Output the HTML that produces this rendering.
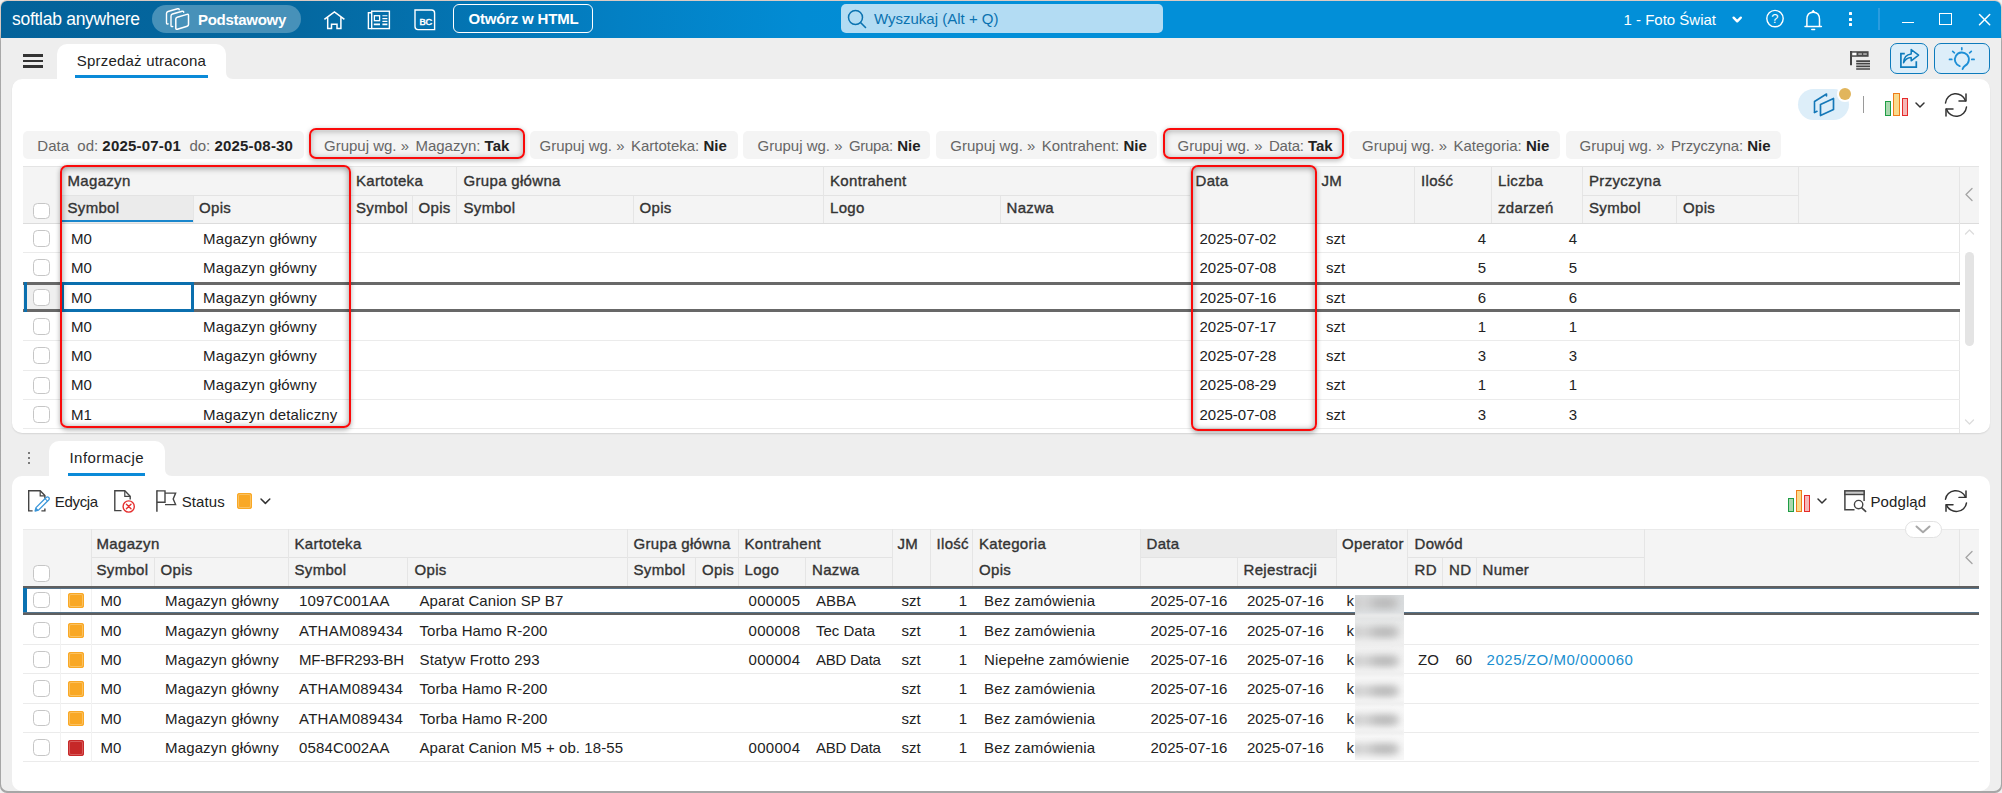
<!DOCTYPE html><html><head><meta charset="utf-8"><title>softlab anywhere</title><style>
*{box-sizing:border-box}
html,body{margin:0;padding:0}
body{width:2002px;height:793px;overflow:hidden;position:relative;background:#eeeeee;font-family:"Liberation Sans",sans-serif;font-size:15px;color:#222}
.a{position:absolute}
.t{position:absolute;white-space:nowrap;line-height:20px;height:20px}
.h{position:absolute;white-space:nowrap;line-height:20px;height:20px;color:#333;-webkit-text-stroke:0.36px #333;letter-spacing:0.32px}
.b{font-weight:700}
.w{color:#fff}
.cb{position:absolute;width:16.8px;height:16.8px;border:1.5px solid #c6c6c6;border-radius:4.5px;background:#fff}
.vl{position:absolute;width:1px;background:#e5e5e5}
.hl{position:absolute;height:1px;background:#ebebeb}
.chip{position:absolute;top:131px;height:28px;background:#f4f4f4;border-radius:5px}
.chip>span{position:absolute;top:4.8px;line-height:20px;white-space:nowrap;color:#666}
.chip b{color:#222;font-weight:700}
svg{position:absolute;overflow:visible}
</style></head><body>
<div class="a" style="left:0px;top:0px;width:2002px;height:793px;background:#f1f1f1"></div>
<div class="a" style="left:0px;top:0px;width:2002px;height:793px;background:linear-gradient(180deg,#dccbc3 0px,#d6c8c2 30px,#a8a8a8 42px,#a6a6a6 100%);border-radius:7px 7px 7px 7px"></div>
<div class="a" style="left:1px;top:1px;width:2000px;height:790.3px;background:#eeeeee;border-radius:6px 6px 7px 7px"></div>
<div class="a" style="left:1px;top:1px;width:2000px;height:37px;background:linear-gradient(90deg,#03629a 0px,#0468a0 300px,#0380c4 620px,#028cd4 800px,#028fd8 1000px,#028fd8 2000px);border-radius:6px 6px 0 0"></div>
<div class="t w" style="left:12px;top:9.0px;font-size:17.5px;letter-spacing:-0.28px">softlab anywhere</div>
<div class="a" style="left:152px;top:5px;width:149px;height:28px;background:#4791b9;border-radius:14px"></div>
<div class="t w b" style="left:198px;top:9.5px;font-size:15px;letter-spacing:-0.28px">Podstawowy</div>
<svg style="left:164px;top:7px;" width="27" height="24" viewBox="0 0 27 24" preserveAspectRatio="none" fill="none"><path d="M4.2 16.9 Q2.5 17.4 2.5 15.8 L2.5 6.5 Q2.5 5 4 4.5 L13.6 1.8 Q15.2 1.4 15.2 2.8" stroke="#fff" stroke-width="1.4" stroke-linecap="round"/>
<path d="M8.7 19.5 Q7 20 7 18.4 L7 9 Q7 7.5 8.5 7 L18.1 4.3 Q19.7 3.9 19.7 5.3" stroke="#fff" stroke-width="1.4" stroke-linecap="round"/>
<path d="M11.8 12 Q11.8 10.6 13.2 10.2 L23 7.4 Q24.5 7 24.5 8.5 L24.5 17.5 Q24.5 18.8 23.2 19.2 L13.4 22.2 Q11.8 22.7 11.8 21.2 Z" stroke="#fff" stroke-width="1.5" stroke-linejoin="round"/></svg>
<svg style="left:323px;top:9px;" width="23" height="21" viewBox="0 0 23 21" preserveAspectRatio="none" fill="none"><path d="M2 9.9 L11.4 2.9 L20.8 9.9 M4.7 8.2 V19.6 H8.5 V15.2 H14 V19.6 H17.9 V8.2" stroke="#fff" stroke-width="1.5" stroke-linejoin="miter" stroke-linecap="square"/></svg>
<svg style="left:367px;top:10px;" width="24" height="20" viewBox="0 0 24 20" preserveAspectRatio="none" fill="none"><rect x="4.7" y="1.2" width="17.7" height="17.4" stroke="#fff" stroke-width="1.4"/><path d="M4.7 2.8 H1.4 V18.6 H4.7" stroke="#fff" stroke-width="1.4"/>
<rect x="7.4" y="5.7" width="5.2" height="5" stroke="#fff" stroke-width="1.3"/>
<path d="M15.4 5.8 H20.4 M15.4 8.6 H20.4 M15.4 11.4 H20.4" stroke="#fff" stroke-width="1.1"/><path d="M6.8 14.4 H13 M15.4 14.4 H20.4" stroke="#fff" stroke-width="1.7"/></svg>
<svg style="left:413.8px;top:9px;" width="22" height="22" viewBox="0 0 22 22" preserveAspectRatio="none" fill="none"><path d="M1 1 H17.5 Q20.6 1 20.6 4 V20.6 H4 Q1 20.6 1 17.5 Z" stroke="#fff" stroke-width="1.4"/></svg>
<div class="t w" style="left:419.4px;top:12.100000000000001px;font-size:9.2px;letter-spacing:-0.1px;-webkit-text-stroke:0.5px #fff">BC</div>
<div class="a" style="left:453px;top:4px;width:140px;height:29px;border:1.6px solid #fff;border-radius:6px"></div>
<div class="t w b" style="left:468.5px;top:8.5px;font-size:15px;letter-spacing:-0.2px">Otwórz w HTML</div>
<div class="a" style="left:841px;top:4px;width:322px;height:29px;background:#b3dcf3;border-radius:5px"></div>
<svg style="left:847px;top:9px;" width="20" height="20" viewBox="0 0 20 20" preserveAspectRatio="none" fill="none"><circle cx="8.5" cy="8.5" r="7" stroke="#0a72b0" stroke-width="1.5"/><path d="M13.5 13.5 L18.5 18.5" stroke="#0a72b0" stroke-width="1.6" stroke-linecap="round"/></svg>
<div class="t" style="left:874px;top:8.5px;color:#0a72b0;font-size:15px">Wyszukaj (Alt + Q)</div>
<div class="t w" style="left:1623.5px;top:9.5px;font-size:15px">1 - Foto Świat</div>
<svg style="left:1731.9px;top:15.6px;" width="11" height="8" viewBox="0 0 11 8" preserveAspectRatio="none" fill="none"><path d="M1.6 1.7 L5.2 5.3 L8.8 1.7" stroke="#fff" stroke-width="2.4" stroke-linecap="round" stroke-linejoin="round"/></svg>
<svg style="left:1765px;top:9px;" width="20" height="20" viewBox="0 0 20 20" preserveAspectRatio="none" fill="none"><circle cx="10" cy="9.6" r="8.2" stroke="#fff" stroke-width="1.4"/></svg>
<div class="t w" style="left:1771.2px;top:9px;font-size:13px">?</div>
<svg style="left:1803px;top:8px;" width="20" height="23" viewBox="0 0 20 23" preserveAspectRatio="none" fill="none"><path d="M3.9 18 V11.5 Q3.9 4.3 10.2 4.3 Q16.5 4.3 16.5 11.5 V18 M2 18.4 H18.4 M8.8 21.5 H11.6" stroke="#fff" stroke-width="1.5" stroke-linecap="round"/><path d="M8.9 4 L10.2 2 L11.5 4 Z" fill="#fff" stroke="#fff" stroke-width="0.8" stroke-linejoin="round"/></svg>
<div class="a" style="left:1848.7px;top:12px;width:3.2px;height:3.2px;background:#fff;border-radius:0.6px"></div>
<div class="a" style="left:1848.7px;top:17.6px;width:3.2px;height:3.2px;background:#fff;border-radius:0.6px"></div>
<div class="a" style="left:1848.7px;top:23.2px;width:3.2px;height:3.2px;background:#fff;border-radius:0.6px"></div>
<div class="a" style="left:1878.2px;top:8px;width:2.2px;height:22px;background:#2a9cdf"></div>
<div class="a" style="left:1901.7px;top:22px;width:12.6px;height:1.4px;background:#fff"></div>
<div class="a" style="left:1939px;top:12.5px;width:13px;height:12.5px;border:1.6px solid #fff"></div>
<svg style="left:1978px;top:13px;" width="13" height="13" viewBox="0 0 13 13" preserveAspectRatio="none" fill="none"><path d="M1.5 1.5 L11.7 11.7 M11.7 1.5 L1.5 11.7" stroke="#fff" stroke-width="1.5" stroke-linecap="round"/></svg>
<div class="a" style="left:23px;top:54.3px;width:20px;height:2.7px;background:#333"></div>
<div class="a" style="left:23px;top:59.8px;width:20px;height:2.7px;background:#333"></div>
<div class="a" style="left:23px;top:65.3px;width:20px;height:2.7px;background:#333"></div>
<div class="a" style="left:57px;top:44.2px;width:169.3px;height:40px;background:#fff;border-radius:10px 10px 0 0"></div>
<svg style="left:226.3px;top:72px;" width="7" height="7" viewBox="0 0 7 7" preserveAspectRatio="none" fill="none"><path d="M0 0 Q0 7 7 7 L0 7 Z" fill="#fff"/></svg>
<div class="t" style="left:76.8px;top:50.7px;font-size:15px;color:#222;letter-spacing:0.2px">Sprzedaż utracona</div>
<div class="a" style="left:75px;top:75px;width:133px;height:3px;background:#0b8ad8"></div>
<svg style="left:1850px;top:51px;" width="21" height="20" viewBox="0 0 21 20" preserveAspectRatio="none" fill="none"><path d="M1 0 V14.2" stroke="#444" stroke-width="2"/><rect x="0.2" y="0.2" width="18.4" height="5.6" fill="#4a4a4a"/><rect x="2.2" y="1.7" width="4.3" height="2.6" fill="#fff"/><rect x="8.3" y="2.3" width="3.6" height="1.5" fill="#bbb"/><rect x="13.2" y="2.3" width="3.6" height="1.5" fill="#bbb"/>
<path d="M6.2 10.1 H20 M6.2 12.7 H20 M6.2 15.4 H20 M6.2 18 H20" stroke="#444" stroke-width="1.7"/></svg>
<div class="a" style="left:1889.8px;top:43px;width:38.3px;height:31px;background:#ddeef9;border:1.7px solid #0d7bbc;border-radius:7px"></div>
<div class="a" style="left:1933.8px;top:43px;width:56.2px;height:31px;background:#ddeef9;border:1.7px solid #0d7bbc;border-radius:7px"></div>
<svg style="left:1899px;top:48px;" width="22" height="21" viewBox="0 0 22 21" preserveAspectRatio="none" fill="none"><path d="M5.8 5.7 H1.9 V19.2 H17.3 V13.2" stroke="#0d7bbc" stroke-width="1.7" stroke-linejoin="miter"/><path d="M4.6 14.7 Q5 6.6 12.2 5.9 V1.6 L19.6 7.1 L12.2 12.8 V9.4 Q7 9.6 4.6 14.7 Z" stroke="#0d7bbc" stroke-width="1.5" stroke-linejoin="round"/></svg>
<svg style="left:1949px;top:46px;" width="26" height="26" viewBox="0 0 26 26" preserveAspectRatio="none" fill="none"><path d="M10.7 20.1 A7 7 0 1 1 16.2 19.6 Q14.3 20.8 13.6 23" stroke="#1e8fd6" stroke-width="1.9" stroke-linecap="round" stroke-linejoin="round"/><path d="M12.8 1.8 V3.6 M3.7 5.4 L5.4 6.8 M22.3 5.4 L20.6 6.8 M0.5 13.4 H2.8 M22.8 13.4 H25.1" stroke="#1e8fd6" stroke-width="1.7" stroke-linecap="round"/></svg>
<div class="a" style="left:12px;top:79px;width:1978px;height:354px;background:#fff;border-radius:10px;box-shadow:0 1px 1.5px rgba(0,0,0,0.10)"></div>
<div class="a" style="left:1798px;top:89px;width:51px;height:31px;background:#ddeef9;border-radius:15.5px"></div>
<svg style="left:1812px;top:92px;" width="24" height="25" viewBox="0 0 24 25" preserveAspectRatio="none" fill="none"><path d="M2.5 20.5 V9.5 L14.5 2 V4" stroke="#1478b8" stroke-width="1.6" stroke-linejoin="round" stroke-linecap="round"/><path d="M2.5 20.5 L5 19.3" stroke="#1478b8" stroke-width="1.6" stroke-linecap="round"/>
<path d="M8.5 12.5 L21.5 6.5 V17.5 L8.5 23.5 Z" stroke="#1478b8" stroke-width="1.7" stroke-linejoin="round"/></svg>
<div class="a" style="left:1837.2px;top:86.3px;width:15.4px;height:15.4px;background:#fff;border-radius:50%"></div>
<div class="a" style="left:1838.8px;top:87.9px;width:12.2px;height:12.2px;background:#e1b55c;border-radius:50%"></div>
<div class="a" style="left:1863px;top:96px;width:1.3px;height:17px;background:#9a9a9a"></div>
<div class="a" style="left:1885px;top:101px;width:6.4px;height:15px;background:#a9d8ae;border:1.6px solid #1f9d45"></div>
<div class="a" style="left:1893px;top:93px;width:7px;height:23px;background:#f9da8c;border:1.6px solid #ef7d1a"></div>
<div class="a" style="left:1901.8px;top:97.8px;width:6.4px;height:18.2px;background:#f5b8b8;border:1.6px solid #e52a2a"></div>
<svg style="left:1914.5px;top:101.5px;" width="10" height="7" viewBox="0 0 10 7" preserveAspectRatio="none" fill="none"><path d="M1 1 L5 5 L9 1" stroke="#333" stroke-width="1.5" stroke-linecap="round" stroke-linejoin="round"/></svg>
<svg style="left:1944px;top:92.5px;" width="24" height="24" viewBox="0 0 24 24" preserveAspectRatio="none" fill="none"><path d="M1.5 10 A10.3 10.3 0 0 1 21.5 7.8" stroke="#333" stroke-width="1.5" stroke-linecap="round"/><path d="M22 1 V8 H15" stroke="#333" stroke-width="1.5" stroke-linecap="round" stroke-linejoin="round"/>
<path d="M22.5 14 A10.3 10.3 0 0 1 2.5 16.2" stroke="#333" stroke-width="1.5" stroke-linecap="round"/><path d="M2 23 V16 H9" stroke="#333" stroke-width="1.5" stroke-linecap="round" stroke-linejoin="round"/></svg>
<div class="chip" style="left:23px;width:280.5px"><span style="left:14.3px">Data&nbsp; od: <b style="letter-spacing:0.2px">2025-07-01</b>&nbsp; do: <b style="letter-spacing:0.2px">2025-08-30</b></span></div>
<div class="chip" style="left:310px;width:214px"><span style="left:14px">Grupuj wg. »<i style="margin-left:-2px"></i>&nbsp; Magazyn: <b>Tak</b></span></div>
<div class="chip" style="left:530px;width:207.5px"><span style="left:9.5px">Grupuj wg. »<i style="margin-left:-2px"></i>&nbsp; Kartoteka: <b>Nie</b></span></div>
<div class="chip" style="left:743px;width:187px"><span style="left:14.5px">Grupuj wg. »<i style="margin-left:-2px"></i>&nbsp; <span style="position:static;letter-spacing:-0.3px">Grupa:</span> <b>Nie</b></span></div>
<div class="chip" style="left:936px;width:221px"><span style="left:14.3px">Grupuj wg. »<i style="margin-left:-2px"></i>&nbsp; Kontrahent: <b>Nie</b></span></div>
<div class="chip" style="left:1163.5px;width:179px"><span style="left:14px">Grupuj wg. »<i style="margin-left:-2px"></i>&nbsp; <span style="position:static;letter-spacing:-0.2px">Data:</span> <b>Tak</b></span></div>
<div class="chip" style="left:1348.5px;width:211px"><span style="left:13.5px">Grupuj wg. »<i style="margin-left:-2px"></i>&nbsp; Kategoria: <b>Nie</b></span></div>
<div class="chip" style="left:1565.5px;width:215.5px"><span style="left:14px">Grupuj wg. »<i style="margin-left:-2px"></i>&nbsp; <span style="position:static;letter-spacing:-0.12px">Przyczyna:</span> <b>Nie</b></span></div>
<div class="a" style="left:23px;top:166px;width:1956px;height:56.5px;background:#f4f4f4;border-top:1px solid #e4e4e4"></div>
<div class="a" style="left:61px;top:195px;width:132px;height:27.5px;background:#ebebeb"></div>
<div class="a" style="left:61px;top:220.3px;width:132px;height:1.7px;background:#1a86cc"></div>
<div class="a" style="left:23px;top:222.5px;width:1956px;height:1px;background:#dcdcdc"></div>
<div class="vl" style="left:60px;top:166px;height:56.5px"></div>
<div class="vl" style="left:193px;top:195px;height:27.5px"></div>
<div class="vl" style="left:349px;top:166px;height:56.5px"></div>
<div class="vl" style="left:412px;top:195px;height:27.5px"></div>
<div class="vl" style="left:456px;top:166px;height:56.5px"></div>
<div class="vl" style="left:633px;top:195px;height:27.5px"></div>
<div class="vl" style="left:823px;top:166px;height:56.5px"></div>
<div class="vl" style="left:1000px;top:195px;height:27.5px"></div>
<div class="vl" style="left:1190px;top:166px;height:56.5px"></div>
<div class="vl" style="left:1316px;top:166px;height:56.5px"></div>
<div class="vl" style="left:1414px;top:166px;height:56.5px"></div>
<div class="vl" style="left:1491px;top:166px;height:56.5px"></div>
<div class="vl" style="left:1582px;top:166px;height:56.5px"></div>
<div class="vl" style="left:1676px;top:195px;height:27.5px"></div>
<div class="vl" style="left:1798px;top:166px;height:56.5px"></div>
<div class="vl" style="left:1959px;top:166px;height:267px"></div>
<div class="hl" style="left:61px;top:195px;width:288px;background:#e3e3e3"></div>
<div class="hl" style="left:350px;top:195px;width:106px;background:#e3e3e3"></div>
<div class="hl" style="left:457px;top:195px;width:366px;background:#e3e3e3"></div>
<div class="hl" style="left:824px;top:195px;width:366px;background:#e3e3e3"></div>
<div class="hl" style="left:1582px;top:195px;width:216px;background:#e3e3e3"></div>
<div class="h" style="left:67.5px;top:170.8px;">Magazyn</div>
<div class="h" style="left:67.5px;top:197.8px;">Symbol</div>
<div class="h" style="left:199px;top:197.8px;">Opis</div>
<div class="h" style="left:356px;top:170.8px;">Kartoteka</div>
<div class="h" style="left:356px;top:197.8px;">Symbol</div>
<div class="h" style="left:418.5px;top:197.8px;">Opis</div>
<div class="h" style="left:463.5px;top:170.8px;">Grupa główna</div>
<div class="h" style="left:463.5px;top:197.8px;">Symbol</div>
<div class="h" style="left:639.5px;top:197.8px;">Opis</div>
<div class="h" style="left:830px;top:170.8px;">Kontrahent</div>
<div class="h" style="left:830px;top:197.8px;">Logo</div>
<div class="h" style="left:1006.5px;top:197.8px;">Nazwa</div>
<div class="h" style="left:1195.5px;top:170.8px;">Data</div>
<div class="h" style="left:1321.5px;top:170.8px;">JM</div>
<div class="h" style="left:1421px;top:170.8px;">Ilość</div>
<div class="h" style="left:1498px;top:170.8px;">Liczba</div>
<div class="h" style="left:1498px;top:197.8px;">zdarzeń</div>
<div class="h" style="left:1589px;top:170.8px;">Przyczyna</div>
<div class="h" style="left:1589px;top:197.8px;">Symbol</div>
<div class="h" style="left:1683px;top:197.8px;">Opis</div>
<div class="cb" style="left:33px;top:202.7px"></div>
<svg style="left:1963.5px;top:186.5px;" width="10" height="15" viewBox="0 0 10 15" preserveAspectRatio="none" fill="none"><path d="M8 1.5 L2 7.5 L8 13.5" stroke="#a6a6a6" stroke-width="1.4" stroke-linecap="round" stroke-linejoin="round"/></svg>
<div class="hl" style="left:23px;top:252.0px;width:1937px"></div>
<div class="cb" style="left:33px;top:230.0px"></div>
<div class="t" style="left:71px;top:228.5px;">M0</div>
<div class="t" style="left:203px;top:228.5px;letter-spacing:0.15px">Magazyn główny</div>
<div class="t" style="left:1199.5px;top:228.5px;">2025-07-02</div>
<div class="t" style="left:1326px;top:228.5px;">szt</div>
<div class="t" style="right:516px;top:228.5px;">4</div>
<div class="t" style="right:425px;top:228.5px;">4</div>
<div class="hl" style="left:23px;top:281.8px;width:1937px"></div>
<div class="cb" style="left:33px;top:259.4px"></div>
<div class="t" style="left:71px;top:257.9px;">M0</div>
<div class="t" style="left:203px;top:257.9px;letter-spacing:0.15px">Magazyn główny</div>
<div class="t" style="left:1199.5px;top:257.9px;">2025-07-08</div>
<div class="t" style="left:1326px;top:257.9px;">szt</div>
<div class="t" style="right:516px;top:257.9px;">5</div>
<div class="t" style="right:425px;top:257.9px;">5</div>
<div class="a" style="left:23px;top:282.3px;width:1937px;height:29.399999999999977px;background:#fff;border-top:3px solid #686868;border-bottom:3px solid #686868"></div>
<div class="a" style="left:23px;top:285.3px;width:38px;height:23.399999999999977px;background:#efefef"></div>
<div class="a" style="left:23.5px;top:282.3px;width:3px;height:29.399999999999977px;background:#0b6fae"></div>
<div class="a" style="left:61px;top:282.3px;width:133px;height:29.399999999999977px;border:3.4px solid #0b6fae;background:#fff"></div>
<div class="cb" style="left:33px;top:289.4px"></div>
<div class="t" style="left:71px;top:287.9px;">M0</div>
<div class="t" style="left:203px;top:287.9px;letter-spacing:0.15px">Magazyn główny</div>
<div class="t" style="left:1199.5px;top:287.9px;">2025-07-16</div>
<div class="t" style="left:1326px;top:287.9px;">szt</div>
<div class="t" style="right:516px;top:287.9px;">6</div>
<div class="t" style="right:425px;top:287.9px;">6</div>
<div class="hl" style="left:23px;top:340.0px;width:1937px"></div>
<div class="cb" style="left:33px;top:318.1px"></div>
<div class="t" style="left:71px;top:316.6px;">M0</div>
<div class="t" style="left:203px;top:316.6px;letter-spacing:0.15px">Magazyn główny</div>
<div class="t" style="left:1199.5px;top:316.6px;">2025-07-17</div>
<div class="t" style="left:1326px;top:316.6px;">szt</div>
<div class="t" style="right:516px;top:316.6px;">1</div>
<div class="t" style="right:425px;top:316.6px;">1</div>
<div class="hl" style="left:23px;top:369.5px;width:1937px"></div>
<div class="cb" style="left:33px;top:347.25px"></div>
<div class="t" style="left:71px;top:345.75px;">M0</div>
<div class="t" style="left:203px;top:345.75px;letter-spacing:0.15px">Magazyn główny</div>
<div class="t" style="left:1199.5px;top:345.75px;">2025-07-28</div>
<div class="t" style="left:1326px;top:345.75px;">szt</div>
<div class="t" style="right:516px;top:345.75px;">3</div>
<div class="t" style="right:425px;top:345.75px;">3</div>
<div class="hl" style="left:23px;top:399.0px;width:1937px"></div>
<div class="cb" style="left:33px;top:376.75px"></div>
<div class="t" style="left:71px;top:375.25px;">M0</div>
<div class="t" style="left:203px;top:375.25px;letter-spacing:0.15px">Magazyn główny</div>
<div class="t" style="left:1199.5px;top:375.25px;">2025-08-29</div>
<div class="t" style="left:1326px;top:375.25px;">szt</div>
<div class="t" style="right:516px;top:375.25px;">1</div>
<div class="t" style="right:425px;top:375.25px;">1</div>
<div class="hl" style="left:23px;top:428.0px;width:1937px"></div>
<div class="cb" style="left:33px;top:406.0px"></div>
<div class="t" style="left:71px;top:404.5px;">M1</div>
<div class="t" style="left:203px;top:404.5px;letter-spacing:0.15px">Magazyn detaliczny</div>
<div class="t" style="left:1199.5px;top:404.5px;">2025-07-08</div>
<div class="t" style="left:1326px;top:404.5px;">szt</div>
<div class="t" style="right:516px;top:404.5px;">3</div>
<div class="t" style="right:425px;top:404.5px;">3</div>
<svg style="left:1963.5px;top:228px;" width="11" height="8" viewBox="0 0 11 8" preserveAspectRatio="none" fill="none"><path d="M1.5 6 L5.5 2 L9.5 6" stroke="#dcdcdc" stroke-width="1.3" stroke-linecap="round" stroke-linejoin="round"/></svg>
<svg style="left:1963.5px;top:418px;" width="11" height="8" viewBox="0 0 11 8" preserveAspectRatio="none" fill="none"><path d="M1.5 2 L5.5 6 L9.5 2" stroke="#dcdcdc" stroke-width="1.3" stroke-linecap="round" stroke-linejoin="round"/></svg>
<div class="a" style="left:1965px;top:251.8px;width:9px;height:94.6px;background:#e4e4e4;border-radius:4.5px"></div>
<div class="a" style="left:60px;top:165.3px;width:290.8px;height:263px;border:2.2px solid #fa0a0a;border-radius:7px;box-shadow:0 1.5px 5px rgba(0,0,0,0.32), inset 0 1px 6px rgba(0,0,0,0.42)"></div>
<div class="a" style="left:1191px;top:165.3px;width:125.8px;height:266px;border:2.2px solid #fa0a0a;border-radius:7px;box-shadow:0 1.5px 5px rgba(0,0,0,0.32), inset 0 1px 6px rgba(0,0,0,0.42)"></div>
<div class="a" style="left:309.2px;top:127.7px;width:216px;height:31.6px;border:2.2px solid #fa0a0a;border-radius:7px;box-shadow:0 1.5px 5px rgba(0,0,0,0.26), inset 0 1px 6px rgba(0,0,0,0.3)"></div>
<div class="a" style="left:1162.7px;top:127.7px;width:181px;height:31.6px;border:2.2px solid #fa0a0a;border-radius:7px;box-shadow:0 1.5px 5px rgba(0,0,0,0.26), inset 0 1px 6px rgba(0,0,0,0.3)"></div>
<div class="a" style="left:28px;top:451.5px;width:2.4px;height:2.4px;background:#555;border-radius:50%"></div>
<div class="a" style="left:28px;top:456.5px;width:2.4px;height:2.4px;background:#555;border-radius:50%"></div>
<div class="a" style="left:28px;top:461.5px;width:2.4px;height:2.4px;background:#555;border-radius:50%"></div>
<div class="a" style="left:49px;top:440.8px;width:116px;height:40px;background:#fff;border-radius:10px 10px 0 0"></div>
<svg style="left:165px;top:469px;" width="7" height="7" viewBox="0 0 7 7" preserveAspectRatio="none" fill="none"><path d="M0 0 Q0 7 7 7 L0 7 Z" fill="#fff"/></svg>
<div class="t" style="left:69.5px;top:447.5px;color:#222;letter-spacing:0.45px">Informacje</div>
<div class="a" style="left:68px;top:472.5px;width:77px;height:3px;background:#0b8ad8"></div>
<div class="a" style="left:12px;top:476px;width:1978px;height:315px;background:#fff;border-radius:10px"></div>
<svg style="left:28px;top:490.2px;" width="23" height="23" viewBox="0 0 23 23" preserveAspectRatio="none" fill="none"><path d="M4.6 20.9 H0.7 V0.7 H12.2 L16.9 5.6 V8.5" stroke="#444" stroke-width="1.4" stroke-linejoin="miter"/><path d="M12.2 0.9 V5.8 H16.7" stroke="#444" stroke-width="1.2"/>
<path d="M13.4 20.9 H16.9 V18.6" stroke="#444" stroke-width="1.4"/>
<path d="M10.5 20.1 L20.9 9.7 A1.8 1.8 0 0 0 18.4 7.2 L8 17.6 L7.1 21 Z" fill="#fff" stroke="#3a96d9" stroke-width="1.3" stroke-linejoin="round"/><path d="M8 17.6 L10.5 20.1 L7.1 21 Z" fill="#3a96d9"/><path d="M17 8.6 L19.5 11.1" stroke="#3a96d9" stroke-width="1.1"/></svg>
<div class="t" style="left:54.7px;top:491.5px;letter-spacing:-0.3px">Edycja</div>
<svg style="left:113px;top:490.2px;" width="24" height="24" viewBox="0 0 24 24" preserveAspectRatio="none" fill="none"><path d="M8.5 20.6 H1.8 V0.7 H11.8 L17.2 6.2 V9.5" stroke="#444" stroke-width="1.4" stroke-linejoin="miter"/><path d="M11.8 0.9 V6.4 H17" stroke="#444" stroke-width="1.2"/>
<circle cx="15.7" cy="16.5" r="5.6" fill="#fff" stroke="#e53030" stroke-width="1.4"/><path d="M13.4 14.2 L18 18.8 M18 14.2 L13.4 18.8" stroke="#e53030" stroke-width="1.4" stroke-linecap="round"/></svg>
<svg style="left:155px;top:489px;" width="23" height="24" viewBox="0 0 23 24" preserveAspectRatio="none" fill="none"><path d="M1.9 1.2 V22.8" stroke="#444" stroke-width="1.5"/><path d="M1.9 1.9 H10 V13.2 H1.9" stroke="#444" stroke-width="1.4" stroke-linejoin="miter"/>
<path d="M10 4.1 H20.6 L18.2 9.9 L20.6 15.6 H10" stroke="#444" stroke-width="1.4" stroke-linejoin="miter"/></svg>
<div class="t" style="left:181.7px;top:491.5px;letter-spacing:0.1px">Status</div>
<div class="a" style="left:237px;top:493.2px;width:15px;height:15.5px;background:#f9a825;box-shadow:inset 0 0 0 1px #f9a825, inset 0 0 0 2px #fbc15f;border-radius:3px"></div>
<svg style="left:259.7px;top:497.6px;" width="11" height="7" viewBox="0 0 11 7" preserveAspectRatio="none" fill="none"><path d="M1 1 L5.4 5.4 L9.8 1" stroke="#333" stroke-width="1.5" stroke-linecap="round" stroke-linejoin="round"/></svg>
<div class="a" style="left:1787.9px;top:498.09999999999997px;width:6.5px;height:13.6px;background:#a9d8ae;border:1.6px solid #1f9d45"></div>
<div class="a" style="left:1796.0px;top:490.2px;width:6.2px;height:21.5px;background:#f9da8c;border:1.6px solid #ef7d1a"></div>
<div class="a" style="left:1803.6000000000001px;top:495.2px;width:6.4px;height:16.5px;background:#f5b8b8;border:1.6px solid #e52a2a"></div>
<svg style="left:1816.8px;top:497.6px;" width="10" height="7" viewBox="0 0 10 7" preserveAspectRatio="none" fill="none"><path d="M1 1 L5 5 L9 1" stroke="#333" stroke-width="1.5" stroke-linecap="round" stroke-linejoin="round"/></svg>
<svg style="left:1844px;top:490px;" width="24" height="23" viewBox="0 0 24 23" preserveAspectRatio="none" fill="none"><path d="M10.5 19.7 H0.9 V0.9 H20.1 V11" stroke="#444" stroke-width="1.5"/><rect x="0.9" y="0.9" width="19.2" height="3.6" fill="#c9c9c9" stroke="#444" stroke-width="1.4"/>
<circle cx="14.6" cy="14.6" r="4.2" fill="#fff" stroke="#444" stroke-width="1.4"/><path d="M17.8 17.8 L21.6 21.4" stroke="#444" stroke-width="1.6" stroke-linecap="round"/></svg>
<div class="t" style="left:1870.5px;top:491.5px;letter-spacing:0.1px">Podgląd</div>
<svg style="left:1944px;top:489.6px;" width="24" height="22.2" viewBox="0 0 24 24" preserveAspectRatio="none" fill="none"><path d="M1.5 10 A10.3 10.3 0 0 1 21.5 7.8" stroke="#333" stroke-width="1.5" stroke-linecap="round"/><path d="M22 1 V8 H15" stroke="#333" stroke-width="1.5" stroke-linecap="round" stroke-linejoin="round"/>
<path d="M22.5 14 A10.3 10.3 0 0 1 2.5 16.2" stroke="#333" stroke-width="1.5" stroke-linecap="round"/><path d="M2 23 V16 H9" stroke="#333" stroke-width="1.5" stroke-linecap="round" stroke-linejoin="round"/></svg>
<div class="a" style="left:23px;top:529px;width:1956px;height:56.5px;background:#f4f4f4;border-top:1px solid #eaeaea"></div>
<div class="a" style="left:1141px;top:529px;width:196px;height:28px;background:#ebebeb"></div>
<div class="vl" style="left:91px;top:529px;height:56.5px"></div>
<div class="vl" style="left:154px;top:557px;height:28.5px"></div>
<div class="vl" style="left:288px;top:529px;height:56.5px"></div>
<div class="vl" style="left:407px;top:557px;height:28.5px"></div>
<div class="vl" style="left:627px;top:529px;height:56.5px"></div>
<div class="vl" style="left:695px;top:557px;height:28.5px"></div>
<div class="vl" style="left:738px;top:529px;height:56.5px"></div>
<div class="vl" style="left:805px;top:557px;height:28.5px"></div>
<div class="vl" style="left:892px;top:529px;height:56.5px"></div>
<div class="vl" style="left:930px;top:529px;height:56.5px"></div>
<div class="vl" style="left:972px;top:529px;height:56.5px"></div>
<div class="vl" style="left:1140px;top:529px;height:56.5px"></div>
<div class="vl" style="left:1237px;top:557px;height:28.5px"></div>
<div class="vl" style="left:1336px;top:529px;height:56.5px"></div>
<div class="vl" style="left:1407px;top:529px;height:56.5px"></div>
<div class="vl" style="left:1442px;top:557px;height:28.5px"></div>
<div class="vl" style="left:1476px;top:557px;height:28.5px"></div>
<div class="vl" style="left:1644px;top:529px;height:56.5px"></div>
<div class="vl" style="left:1959px;top:529px;height:56.5px"></div>
<div class="hl" style="left:92px;top:557px;width:196px;background:#e3e3e3"></div>
<div class="hl" style="left:289px;top:557px;width:338px;background:#e3e3e3"></div>
<div class="hl" style="left:628px;top:557px;width:110px;background:#e3e3e3"></div>
<div class="hl" style="left:739px;top:557px;width:153px;background:#e3e3e3"></div>
<div class="hl" style="left:1141px;top:557px;width:195px;background:#e3e3e3"></div>
<div class="hl" style="left:1408px;top:557px;width:236px;background:#e3e3e3"></div>
<div class="h" style="left:96.5px;top:533.8px;">Magazyn</div>
<div class="h" style="left:96.5px;top:559.9px;">Symbol</div>
<div class="h" style="left:160.5px;top:559.9px;">Opis</div>
<div class="h" style="left:294.5px;top:533.8px;">Kartoteka</div>
<div class="h" style="left:294.5px;top:559.9px;">Symbol</div>
<div class="h" style="left:414.5px;top:559.9px;">Opis</div>
<div class="h" style="left:633.5px;top:533.8px;">Grupa główna</div>
<div class="h" style="left:633.5px;top:559.9px;">Symbol</div>
<div class="h" style="left:702px;top:559.9px;">Opis</div>
<div class="h" style="left:744.5px;top:533.8px;">Kontrahent</div>
<div class="h" style="left:744.5px;top:559.9px;">Logo</div>
<div class="h" style="left:812px;top:559.9px;">Nazwa</div>
<div class="h" style="left:897.5px;top:533.8px;">JM</div>
<div class="h" style="left:936.5px;top:533.8px;">Ilość</div>
<div class="h" style="left:979px;top:533.8px;">Kategoria</div>
<div class="h" style="left:979px;top:559.9px;">Opis</div>
<div class="h" style="left:1146.5px;top:533.8px;">Data</div>
<div class="h" style="left:1243.5px;top:559.9px;">Rejestracji</div>
<div class="h" style="left:1342px;top:533.8px;">Operator</div>
<div class="h" style="left:1414.5px;top:533.8px;">Dowód</div>
<div class="h" style="left:1414.5px;top:559.9px;">RD</div>
<div class="h" style="left:1449px;top:559.9px;">ND</div>
<div class="h" style="left:1482.5px;top:559.9px;">Numer</div>
<div class="cb" style="left:33px;top:565px"></div>
<svg style="left:1963.5px;top:549.5px;" width="10" height="15" viewBox="0 0 10 15" preserveAspectRatio="none" fill="none"><path d="M8 1.5 L2 7.5 L8 13.5" stroke="#a6a6a6" stroke-width="1.4" stroke-linecap="round" stroke-linejoin="round"/></svg>
<div class="a" style="left:1904.5px;top:521.2px;width:37.3px;height:17.3px;background:#fff;border:1px solid #e2e2e2;border-radius:8.7px"></div>
<svg style="left:1915px;top:525.3px;" width="16" height="9" viewBox="0 0 16 9" preserveAspectRatio="none" fill="none"><path d="M1.5 1.5 L8 7.2 L14.5 1.5" stroke="#a8a8a8" stroke-width="2" stroke-linecap="round" stroke-linejoin="round"/></svg>
<div class="a" style="left:23px;top:585.8px;width:1956px;height:29.200000000000045px;background:#fff;border-top:2.2px solid #5f5f5f;border-bottom:2.2px solid #5f5f5f;box-shadow:inset 0 1px 0 #56738a, inset 0 -1px 0 #56738a"></div>
<div class="a" style="left:23.3px;top:588.3px;width:3.7px;height:24.200000000000045px;background:#0a72b2"></div>
<div class="a" style="left:60px;top:588.8px;width:1px;height:23.200000000000045px;background:#f2f2f2"></div>
<div class="a" style="left:91px;top:588.8px;width:1px;height:23.200000000000045px;background:#f2f2f2"></div>
<div class="cb" style="left:33px;top:591.6999999999999px"></div>
<div class="a" style="left:68px;top:592.6999999999999px;width:16px;height:15.7px;background:#f9a825;box-shadow:inset 0 0 0 1px #f9a825, inset 0 0 0 2px #fbc15f;border-radius:3px"></div>
<div class="t" style="left:100.5px;top:590.6999999999999px;">M0</div>
<div class="t" style="left:165px;top:590.6999999999999px;letter-spacing:0.15px">Magazyn główny</div>
<div class="t" style="left:299px;top:590.6999999999999px;letter-spacing:0.14px">1097C001AA</div>
<div class="t" style="left:419.5px;top:590.6999999999999px;letter-spacing:0.08px">Aparat Canion SP B7</div>
<div class="t" style="left:748.5px;top:590.6999999999999px;letter-spacing:0.3px">000005</div>
<div class="t" style="left:816px;top:590.6999999999999px;">ABBA</div>
<div class="t" style="left:901.5px;top:590.6999999999999px;">szt</div>
<div class="t" style="right:1035px;top:590.6999999999999px;">1</div>
<div class="t" style="left:984px;top:590.6999999999999px;letter-spacing:0.15px">Bez zamówienia</div>
<div class="t" style="left:1150.5px;top:590.6999999999999px;">2025-07-16</div>
<div class="t" style="left:1247px;top:590.6999999999999px;">2025-07-16</div>
<div class="t" style="left:1346.5px;top:590.6999999999999px;">k</div>
<div class="hl" style="left:23px;top:643.8px;width:1956px"></div>
<div class="a" style="left:60px;top:615px;width:1px;height:29.299999999999955px;background:#f2f2f2"></div>
<div class="a" style="left:91px;top:615px;width:1px;height:29.299999999999955px;background:#f2f2f2"></div>
<div class="cb" style="left:33px;top:621.55px"></div>
<div class="a" style="left:68px;top:622.55px;width:16px;height:15.7px;background:#f9a825;box-shadow:inset 0 0 0 1px #f9a825, inset 0 0 0 2px #fbc15f;border-radius:3px"></div>
<div class="t" style="left:100.5px;top:620.55px;">M0</div>
<div class="t" style="left:165px;top:620.55px;letter-spacing:0.15px">Magazyn główny</div>
<div class="t" style="left:299px;top:620.55px;letter-spacing:0.25px">ATHAM089434</div>
<div class="t" style="left:419.5px;top:620.55px;letter-spacing:0.08px">Torba Hamo R-200</div>
<div class="t" style="left:748.5px;top:620.55px;letter-spacing:0.3px">000008</div>
<div class="t" style="left:816px;top:620.55px;">Tec Data</div>
<div class="t" style="left:901.5px;top:620.55px;">szt</div>
<div class="t" style="right:1035px;top:620.55px;">1</div>
<div class="t" style="left:984px;top:620.55px;letter-spacing:0.15px">Bez zamówienia</div>
<div class="t" style="left:1150.5px;top:620.55px;">2025-07-16</div>
<div class="t" style="left:1247px;top:620.55px;">2025-07-16</div>
<div class="t" style="left:1346.5px;top:620.55px;">k</div>
<div class="hl" style="left:23px;top:673.1px;width:1956px"></div>
<div class="a" style="left:60px;top:644.3px;width:1px;height:29.300000000000068px;background:#f2f2f2"></div>
<div class="a" style="left:91px;top:644.3px;width:1px;height:29.300000000000068px;background:#f2f2f2"></div>
<div class="cb" style="left:33px;top:650.85px"></div>
<div class="a" style="left:68px;top:651.85px;width:16px;height:15.7px;background:#f9a825;box-shadow:inset 0 0 0 1px #f9a825, inset 0 0 0 2px #fbc15f;border-radius:3px"></div>
<div class="t" style="left:100.5px;top:649.85px;">M0</div>
<div class="t" style="left:165px;top:649.85px;letter-spacing:0.15px">Magazyn główny</div>
<div class="t" style="left:299px;top:649.85px;letter-spacing:-0.23px">MF-BFR293-BH</div>
<div class="t" style="left:419.5px;top:649.85px;letter-spacing:0.16px">Statyw Frotto 293</div>
<div class="t" style="left:748.5px;top:649.85px;letter-spacing:0.3px">000004</div>
<div class="t" style="left:816px;top:649.85px;letter-spacing:-0.25px">ABD Data</div>
<div class="t" style="left:901.5px;top:649.85px;">szt</div>
<div class="t" style="right:1035px;top:649.85px;">1</div>
<div class="t" style="left:984px;top:649.85px;letter-spacing:0.15px">Niepełne zamówienie</div>
<div class="t" style="left:1150.5px;top:649.85px;">2025-07-16</div>
<div class="t" style="left:1247px;top:649.85px;">2025-07-16</div>
<div class="t" style="left:1346.5px;top:649.85px;">k</div>
<div class="t" style="left:1418px;top:649.85px;">ZO</div>
<div class="t" style="left:1455.5px;top:649.85px;">60</div>
<div class="t" style="left:1486.5px;top:649.85px;color:#1a8fd0;letter-spacing:0.55px">2025/ZO/M0/000060</div>
<div class="hl" style="left:23px;top:702.7px;width:1956px"></div>
<div class="a" style="left:60px;top:673.6px;width:1px;height:29.600000000000023px;background:#f2f2f2"></div>
<div class="a" style="left:91px;top:673.6px;width:1px;height:29.600000000000023px;background:#f2f2f2"></div>
<div class="cb" style="left:33px;top:680.3000000000001px"></div>
<div class="a" style="left:68px;top:681.3000000000001px;width:16px;height:15.7px;background:#f9a825;box-shadow:inset 0 0 0 1px #f9a825, inset 0 0 0 2px #fbc15f;border-radius:3px"></div>
<div class="t" style="left:100.5px;top:679.3000000000001px;">M0</div>
<div class="t" style="left:165px;top:679.3000000000001px;letter-spacing:0.15px">Magazyn główny</div>
<div class="t" style="left:299px;top:679.3000000000001px;letter-spacing:0.25px">ATHAM089434</div>
<div class="t" style="left:419.5px;top:679.3000000000001px;letter-spacing:0.08px">Torba Hamo R-200</div>
<div class="t" style="left:748.5px;top:679.3000000000001px;letter-spacing:0.3px"></div>
<div class="t" style="left:816px;top:679.3000000000001px;"></div>
<div class="t" style="left:901.5px;top:679.3000000000001px;">szt</div>
<div class="t" style="right:1035px;top:679.3000000000001px;">1</div>
<div class="t" style="left:984px;top:679.3000000000001px;letter-spacing:0.15px">Bez zamówienia</div>
<div class="t" style="left:1150.5px;top:679.3000000000001px;">2025-07-16</div>
<div class="t" style="left:1247px;top:679.3000000000001px;">2025-07-16</div>
<div class="t" style="left:1346.5px;top:679.3000000000001px;">k</div>
<div class="hl" style="left:23px;top:731.9px;width:1956px"></div>
<div class="a" style="left:60px;top:703.2px;width:1px;height:29.199999999999932px;background:#f2f2f2"></div>
<div class="a" style="left:91px;top:703.2px;width:1px;height:29.199999999999932px;background:#f2f2f2"></div>
<div class="cb" style="left:33px;top:709.6999999999999px"></div>
<div class="a" style="left:68px;top:710.6999999999999px;width:16px;height:15.7px;background:#f9a825;box-shadow:inset 0 0 0 1px #f9a825, inset 0 0 0 2px #fbc15f;border-radius:3px"></div>
<div class="t" style="left:100.5px;top:708.6999999999999px;">M0</div>
<div class="t" style="left:165px;top:708.6999999999999px;letter-spacing:0.15px">Magazyn główny</div>
<div class="t" style="left:299px;top:708.6999999999999px;letter-spacing:0.25px">ATHAM089434</div>
<div class="t" style="left:419.5px;top:708.6999999999999px;letter-spacing:0.08px">Torba Hamo R-200</div>
<div class="t" style="left:748.5px;top:708.6999999999999px;letter-spacing:0.3px"></div>
<div class="t" style="left:816px;top:708.6999999999999px;"></div>
<div class="t" style="left:901.5px;top:708.6999999999999px;">szt</div>
<div class="t" style="right:1035px;top:708.6999999999999px;">1</div>
<div class="t" style="left:984px;top:708.6999999999999px;letter-spacing:0.15px">Bez zamówienia</div>
<div class="t" style="left:1150.5px;top:708.6999999999999px;">2025-07-16</div>
<div class="t" style="left:1247px;top:708.6999999999999px;">2025-07-16</div>
<div class="t" style="left:1346.5px;top:708.6999999999999px;">k</div>
<div class="hl" style="left:23px;top:761.1px;width:1956px"></div>
<div class="a" style="left:60px;top:732.4px;width:1px;height:29.200000000000045px;background:#f2f2f2"></div>
<div class="a" style="left:91px;top:732.4px;width:1px;height:29.200000000000045px;background:#f2f2f2"></div>
<div class="cb" style="left:33px;top:738.9px"></div>
<div class="a" style="left:68px;top:739.9px;width:16px;height:15.7px;background:#c62828;box-shadow:inset 0 0 0 1px #c62828, inset 0 0 0 2px #d75a5a;border-radius:3px"></div>
<div class="t" style="left:100.5px;top:737.9px;">M0</div>
<div class="t" style="left:165px;top:737.9px;letter-spacing:0.15px">Magazyn główny</div>
<div class="t" style="left:299px;top:737.9px;letter-spacing:0.14px">0584C002AA</div>
<div class="t" style="left:419.5px;top:737.9px;letter-spacing:0.08px">Aparat Canion M5 + ob. 18-55</div>
<div class="t" style="left:748.5px;top:737.9px;letter-spacing:0.3px">000004</div>
<div class="t" style="left:816px;top:737.9px;letter-spacing:-0.25px">ABD Data</div>
<div class="t" style="left:901.5px;top:737.9px;">szt</div>
<div class="t" style="right:1035px;top:737.9px;">1</div>
<div class="t" style="left:984px;top:737.9px;letter-spacing:0.15px">Bez zamówienia</div>
<div class="t" style="left:1150.5px;top:737.9px;">2025-07-16</div>
<div class="t" style="left:1247px;top:737.9px;">2025-07-16</div>
<div class="t" style="left:1346.5px;top:737.9px;">k</div>
<div class="a" style="left:1355px;top:595px;width:49px;height:164.5px;background:linear-gradient(180deg,#d9dcde 0,#dcdfe1 19px,#e9eaea 27px,#f1f1f1 50px,#f7f7f7 90px,#f8f8f8 100%);overflow:hidden">
<div class="a" style="left:-5px;top:1.699999999999977px;width:50px;height:12px;background:linear-gradient(90deg,#c6c6c6 0,#d6d6d6 30%,#bcbcbc 55%,#bababa 80%,#d0d0d0 100%);border-radius:6px;filter:blur(3.5px)"></div>
<div class="a" style="left:0;top:18.5px;width:49px;height:3px;background:#ececec;filter:blur(1.5px)"></div>
<div class="a" style="left:-5px;top:30.949999999999974px;width:50px;height:12px;background:linear-gradient(90deg,#c6c6c6 0,#d6d6d6 30%,#bcbcbc 55%,#bababa 80%,#d0d0d0 100%);border-radius:6px;filter:blur(3.5px)"></div>
<div class="a" style="left:0;top:47.799999999999955px;width:49px;height:3px;background:#ececec;filter:blur(1.5px)"></div>
<div class="a" style="left:-5px;top:60.25000000000004px;width:50px;height:12px;background:linear-gradient(90deg,#c6c6c6 0,#d6d6d6 30%,#bcbcbc 55%,#bababa 80%,#d0d0d0 100%);border-radius:6px;filter:blur(3.5px)"></div>
<div class="a" style="left:0;top:77.10000000000002px;width:49px;height:3px;background:#ececec;filter:blur(1.5px)"></div>
<div class="a" style="left:-5px;top:89.70000000000009px;width:50px;height:12px;background:linear-gradient(90deg,#c6c6c6 0,#d6d6d6 30%,#bcbcbc 55%,#bababa 80%,#d0d0d0 100%);border-radius:6px;filter:blur(3.5px)"></div>
<div class="a" style="left:0;top:106.70000000000005px;width:49px;height:3px;background:#ececec;filter:blur(1.5px)"></div>
<div class="a" style="left:-5px;top:119.09999999999995px;width:50px;height:12px;background:linear-gradient(90deg,#c6c6c6 0,#d6d6d6 30%,#bcbcbc 55%,#bababa 80%,#d0d0d0 100%);border-radius:6px;filter:blur(3.5px)"></div>
<div class="a" style="left:0;top:135.89999999999998px;width:49px;height:3px;background:#ececec;filter:blur(1.5px)"></div>
<div class="a" style="left:-5px;top:148.3px;width:50px;height:12px;background:linear-gradient(90deg,#c6c6c6 0,#d6d6d6 30%,#bcbcbc 55%,#bababa 80%,#d0d0d0 100%);border-radius:6px;filter:blur(3.5px)"></div>
</div>
</body></html>
